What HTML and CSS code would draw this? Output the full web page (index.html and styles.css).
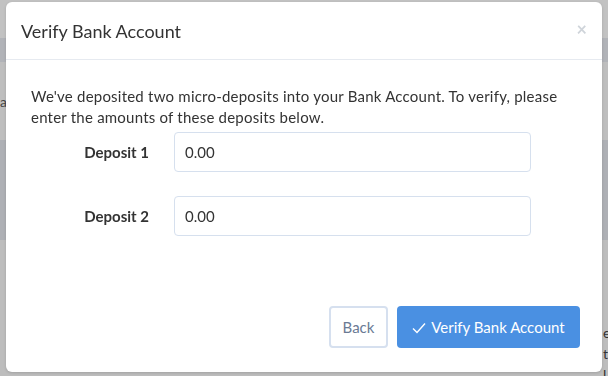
FILE: index.html
```html
<!DOCTYPE html>
<html>
<head>
<meta charset="utf-8">
<link rel="stylesheet" href="styles.css">
</head>
<body>
<div class="page">
  <div class="band band-top"></div>
  <div class="band band-nav"></div>
  <div class="band band-light"><span class="frag-left">a</span></div>
  <div class="band band-dark"></div>
  <div class="band band-bottom">
    <div class="frag-right"><span>e</span><span>t</span><span>l</span></div>
  </div>
</div>
<div class="modal">
  <div class="modal-header">
    <h2 class="modal-title">Verify Bank Account</h2>
    <span class="close">&times;</span>
  </div>
  <div class="modal-body">
    <p class="intro">We've deposited two micro-deposits into your Bank Account. To verify, please enter the amounts of these deposits below.</p>
    <div class="form-row">
      <label class="field-label">Deposit 1</label>
      <input class="field-input" type="text" value="0.00">
    </div>
    <div class="form-row">
      <label class="field-label">Deposit 2</label>
      <input class="field-input" type="text" value="0.00">
    </div>
  </div>
  <div class="modal-footer">
    <button class="btn btn-back">Back</button>
    <button class="btn btn-primary"><svg class="check" width="14" height="12" viewBox="0 0 14 12"><path d="M1 6.5 L5 10.5 L13 1.5" fill="none" stroke="#fff" stroke-width="1.4"/></svg>Verify Bank Account</button>
  </div>
</div>
</body>
</html>
```
FILE: styles.css
```css
* { box-sizing: border-box; }
html, body { margin: 0; padding: 0; }
body {
  width: 608px;
  height: 376px;
  overflow: hidden;
  background: #bdbdbd;
  font-family: Lato, "Open Sans", sans-serif;
  color: #333;
}
.page { display: flex; flex-direction: column; }
.band { width: 100%; }
.band-top { height: 38px; background: #c2c2c2; }
.band-nav { height: 24px; background: #b1b3b8; }
.band-light { height: 78px; background: #bebebe; position: relative; }
.band-dark { height: 100px; background: #aeb0b5; }
.band-bottom { height: 136px; background: #bdbdbd; position: relative; }
.frag-left { position: absolute; left: 0; top: 31px; font-size: 14px; color: #444; }
.frag-right {
  position: absolute; left: 603px; top: 82px;
  display: flex; flex-direction: column; font-size: 14px; line-height: 21px; color: #333;
}
.modal {
  position: fixed;
  left: 6px;
  top: 2px;
  width: 596px;
  height: 370px;
  background: #fff;
  border-radius: 6px;
  display: flex;
  flex-direction: column;
  box-shadow: 0 1px 3px rgba(0,0,0,0.15);
}
.modal-header {
  height: 58px;
  border-bottom: 1px solid #e6eaf0;
  display: flex;
  align-items: center;
  justify-content: space-between;
  padding: 0 15px 0 15px;
}
.modal-title {
  margin: 0;
  font-size: 18px;
  font-weight: 400;
  color: #333;
}
.close {
  font-size: 18px;
  font-weight: 700;
  color: #cfd4da;
  margin-top: -4px;
}
.modal-body {
  flex: 1;
  padding: 26px 25px 0 25px;
}
.intro {
  margin: 0 0 4px 0;
  font-size: 15px;
  line-height: 21px;
  letter-spacing: 0.22px;
  color: #333;
}
.form-row {
  display: flex;
  align-items: center;
  margin-bottom: 24px;
}
.field-label {
  width: 143px;
  padding-right: 25px;
  text-align: right;
  font-size: 15px;
  font-weight: 700;
  color: #333;
}
.field-input {
  width: 357px;
  height: 40px;
  border: 1px solid #d6e0ee;
  border-radius: 4px;
  padding: 0 10px;
  font-family: inherit;
  font-size: 15px;
  color: #333;
  outline: none;
}
.modal-footer {
  display: flex;
  justify-content: flex-end;
  gap: 9px;
  padding: 0 22px 24px 0;
}
.btn {
  height: 42px;
  border-radius: 4px;
  font-family: inherit;
  font-size: 15px;
  display: flex;
  align-items: center;
  justify-content: center;
  cursor: pointer;
}
.btn-back {
  width: 59px;
  background: #fff;
  border: 2px solid #d6e0ef;
  color: #6a7a94;
}
.btn-primary {
  width: 183px;
  background: #4a90e2;
  border: none;
  color: #fff;
  gap: 5px;
}
.check { margin-top: 1px; }
```
